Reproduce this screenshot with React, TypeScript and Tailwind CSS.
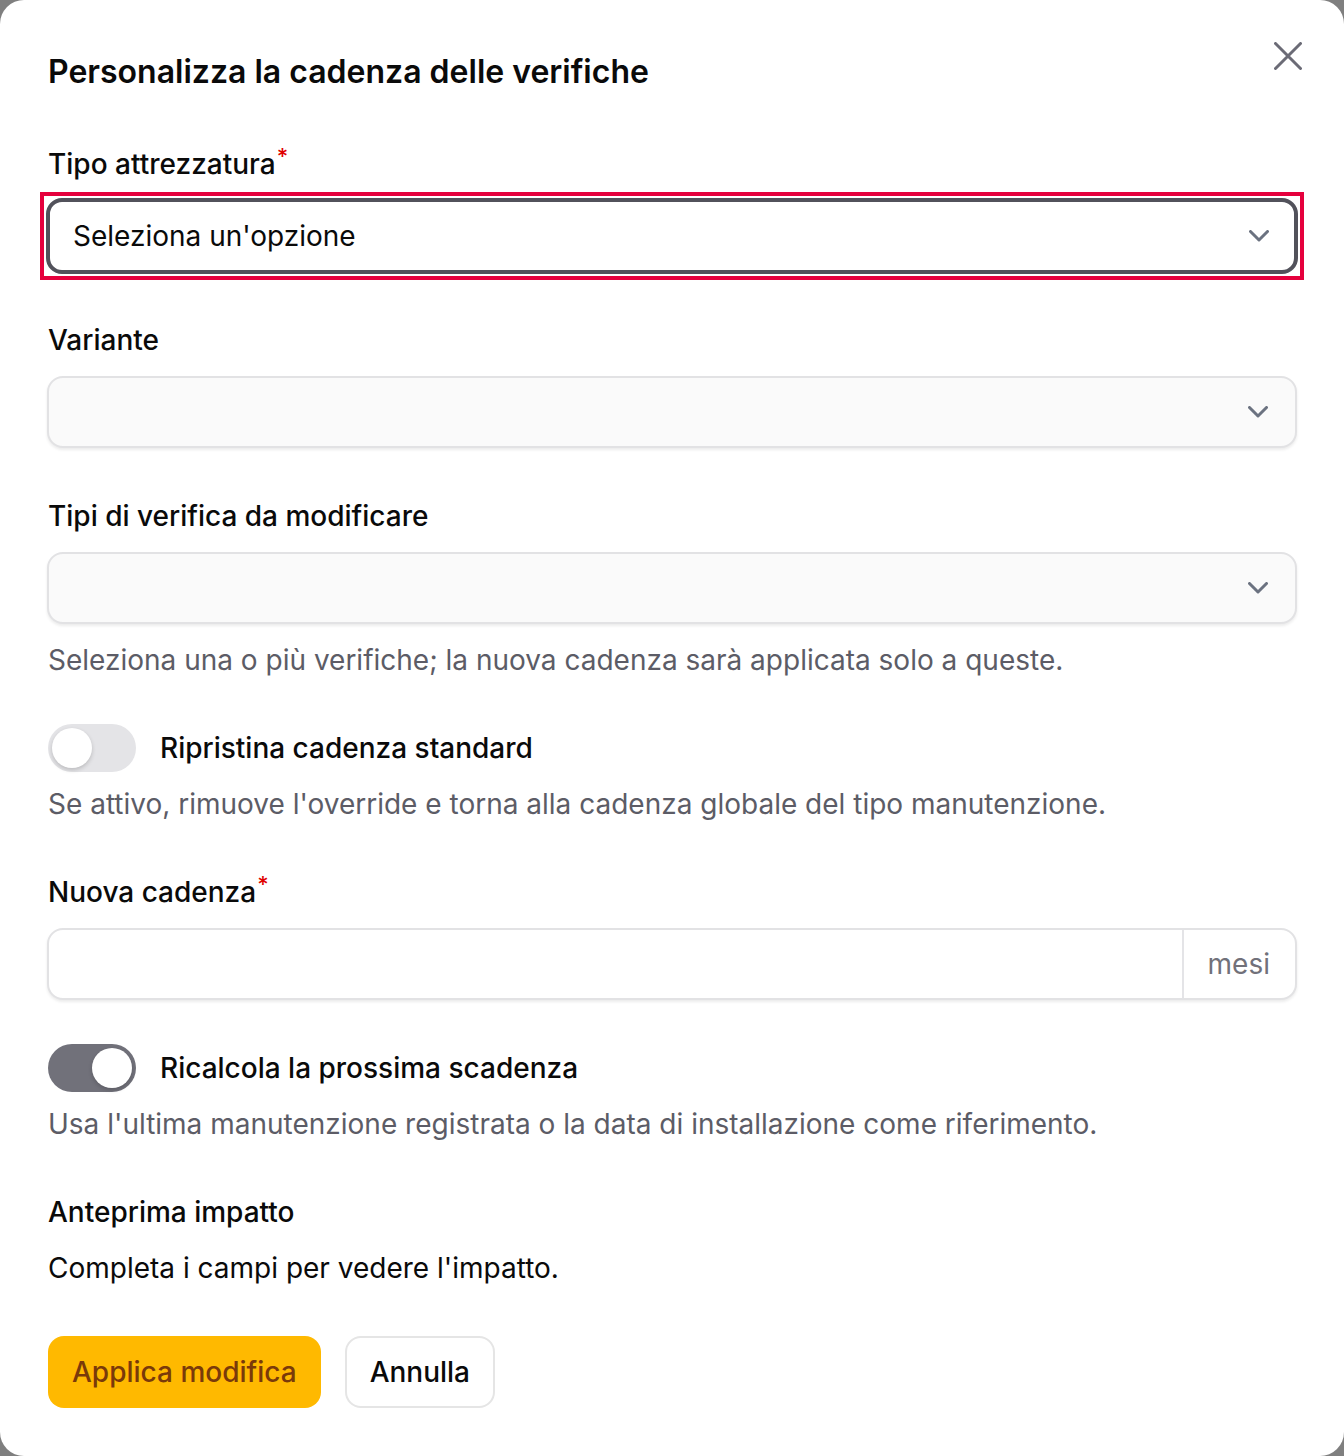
import React from "react";

function Chevron() {
  return (
    <svg width="20" height="12" viewBox="0 0 20 12" fill="none" className="shrink-0">
      <polyline points="1.5,1.5 10,10 18.5,1.5" stroke="#6b7280" strokeWidth="3" strokeLinecap="round" strokeLinejoin="round" />
    </svg>
  );
}

function Label({ text, required }: { text: string; required?: boolean }) {
  return (
    <div className="h-10 text-[28px] leading-[40px] font-medium text-[#0a0a0a]">
      {text}
      {required && (
        <span className="inline-block align-top text-[22px] leading-none font-medium text-[#e00000] ml-[1px] mt-[1px]">*</span>
      )}
    </div>
  );
}

function Helper({ text, className }: { text: string; className?: string }) {
  return <p className={"text-[28px] leading-[40px] text-[#5c5c66] " + (className ?? "")}>{text}</p>;
}

function DisabledSelect() {
  return (
    <div className="mt-4 h-[72px] -mx-px rounded-2xl border-2 border-[#e2e2e4] bg-[#fafafa] shadow-[0_2px_3px_rgba(0,0,0,0.08)] flex items-center justify-end pr-[27px]">
      <Chevron />
    </div>
  );
}

function Toggle({ on, label }: { on: boolean; label: string }) {
  return (
    <div className="flex items-center gap-6 h-12">
      <div
        className={
          on
            ? "w-[88px] h-12 rounded-full bg-[#71717a] flex items-center justify-end px-1"
            : "w-[88px] h-12 rounded-full bg-[#e4e4e7] flex items-center justify-start px-1"
        }
      >
        <div className="w-10 h-10 rounded-full bg-white shadow-[0_2px_4px_rgba(0,0,0,0.18)]" />
      </div>
      <span className="text-[28px] leading-[40px] font-medium text-[#0a0a0a]">{label}</span>
    </div>
  );
}

export default function App() {
  return (
    <div className="bg-[#7f7f7f] min-h-[1456px]" style={{ fontFamily: "Inter, 'Noto Sans', sans-serif" }}>
      <div className="relative bg-white rounded-[24px] px-12 pt-12 pb-12">
        <h2 className="text-[32px] leading-[48px] font-semibold text-[#0a0a0a]">
          Personalizza la cadenza delle verifiche
        </h2>
        <button className="absolute top-[42px] right-[42px] w-7 h-7">
          <svg width="28" height="28" viewBox="0 0 28 28" fill="none">
            <path d="M1.5 1.5 26.5 26.5M26.5 1.5 1.5 26.5" stroke="#6b6b76" strokeWidth="3" strokeLinecap="round" />
          </svg>
        </button>

        <div className="mt-12">
          <Label text="Tipo attrezzatura" required />
          <div className="-mx-2 mt-2 h-[88px] border-4 border-[#e5003d] p-[2px]">
            <div className="h-full rounded-2xl border-4 border-[#52525b] bg-white flex items-center justify-between pl-[23px] pr-[25px]">
              <span className="text-[28px] leading-[40px] text-[#0a0a0a]">Seleziona un'opzione</span>
              <Chevron />
            </div>
          </div>

          <div className="mt-10">
            <Label text="Variante" />
          </div>
          <DisabledSelect />

          <div className="mt-12">
            <Label text="Tipi di verifica da modificare" />
          </div>
          <DisabledSelect />
          <Helper className="mt-4" text="Seleziona una o più verifiche; la nuova cadenza sarà applicata solo a queste." />

          <div className="mt-11">
            <Toggle on={false} label="Ripristina cadenza standard" />
          </div>
          <Helper className="mt-3" text="Se attivo, rimuove l'override e torna alla cadenza globale del tipo manutenzione." />

          <div className="mt-12">
            <Label text="Nuova cadenza" required />
          </div>
          <div className="mt-4 h-[72px] -mx-px rounded-2xl border-2 border-[#e2e2e4] bg-white shadow-[0_2px_3px_rgba(0,0,0,0.08)] flex overflow-hidden">
            <div className="flex-1" />
            <div className="border-l-2 border-[#e4e4e7] pl-6 pr-[25px] flex items-center">
              <span className="text-[28px] leading-[40px] text-[#71717a]">mesi</span>
            </div>
          </div>

          <div className="mt-11">
            <Toggle on={true} label="Ricalcola la prossima scadenza" />
          </div>
          <Helper className="mt-3" text="Usa l'ultima manutenzione registrata o la data di installazione come riferimento." />

          <div className="mt-12 text-[28px] leading-[40px] font-medium text-[#0a0a0a]">Anteprima impatto</div>
          <p className="mt-4 text-[28px] leading-[40px] text-[#0a0a0a]">Completa i campi per vedere l'impatto.</p>

          <div className="mt-12 flex gap-6">
            <button className="h-[72px] px-6 rounded-2xl bg-[#ffb900] text-[28px] font-medium text-[#7a3a0a]">
              Applica modifica
            </button>
            <button className="h-[72px] px-[23px] rounded-2xl bg-white border-2 border-[#e5e5e5] text-[28px] font-medium text-[#0a0a0a]">
              Annulla
            </button>
          </div>
        </div>
      </div>
    </div>
  );
}
